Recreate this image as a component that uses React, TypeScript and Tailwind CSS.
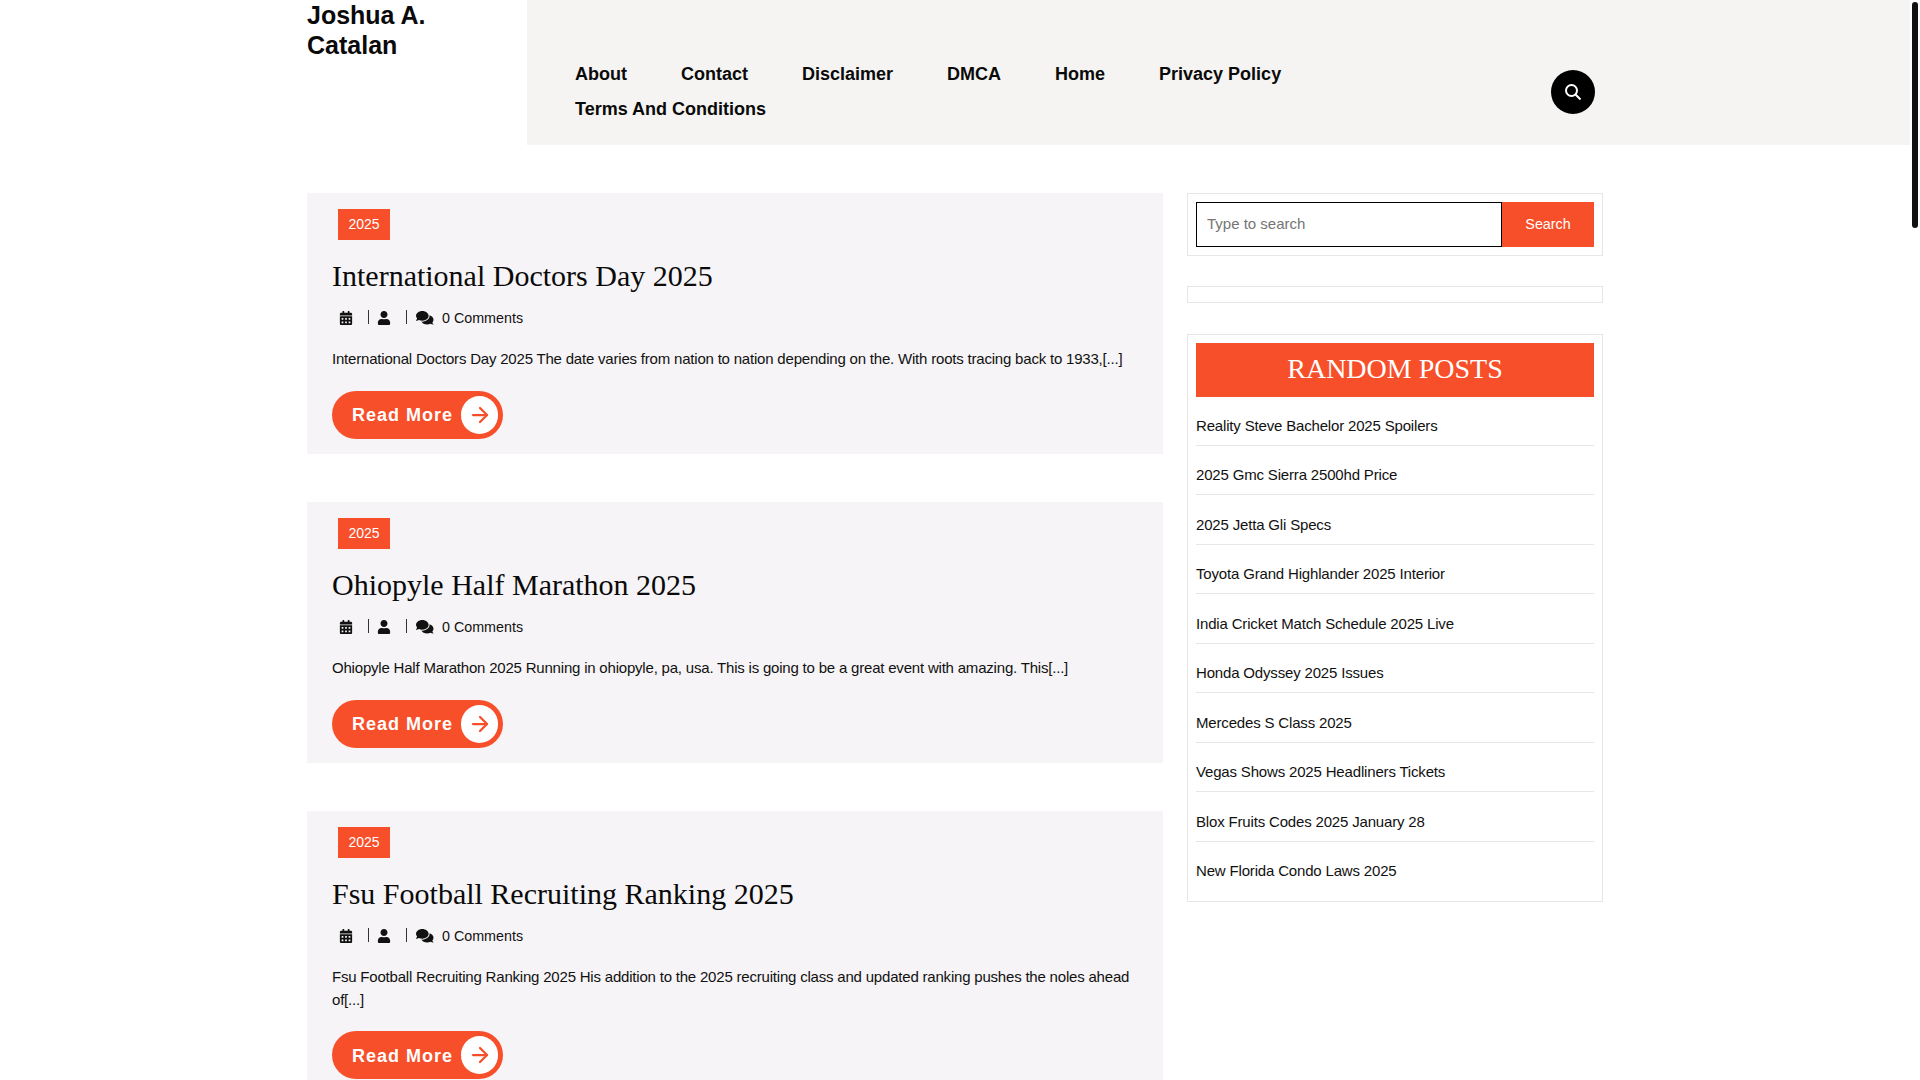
import { ArrowRight } from 'lucide-react'
import { FaCalendarAlt, FaUser, FaComments } from 'react-icons/fa'

const navItems = ['About', 'Contact', 'Disclaimer', 'DMCA', 'Home', 'Privacy Policy', 'Terms And Conditions']

const posts = [
  {
    title: 'International Doctors Day 2025',
    excerpt:
      'International Doctors Day 2025 The date varies from nation to nation depending on the. With roots tracing back to 1933,[...]',
  },
  {
    title: 'Ohiopyle Half Marathon 2025',
    excerpt:
      'Ohiopyle Half Marathon 2025 Running in ohiopyle, pa, usa. This is going to be a great event with amazing. This[...]',
  },
  {
    title: 'Fsu Football Recruiting Ranking 2025',
    excerpt:
      'Fsu Football Recruiting Ranking 2025 His addition to the 2025 recruiting class and updated ranking pushes the noles ahead of[...]',
  },
]

const randomPosts = [
  'Reality Steve Bachelor 2025 Spoilers',
  '2025 Gmc Sierra 2500hd Price',
  '2025 Jetta Gli Specs',
  'Toyota Grand Highlander 2025 Interior',
  'India Cricket Match Schedule 2025 Live',
  'Honda Odyssey 2025 Issues',
  'Mercedes S Class 2025',
  'Vegas Shows 2025 Headliners Tickets',
  'Blox Fruits Codes 2025 January 28',
  'New Florida Condo Laws 2025',
]

function Header() {
  return (
    <header className="flex h-[145px]">
      <div className="w-[527px] pl-[307px]">
        <div className="w-[180px] text-[25px] font-bold leading-[30px] text-[#0a0a0a]">Joshua A. Catalan</div>
      </div>
      <div className="flex flex-1 items-start bg-[#f5f4f2]">
        <nav className="flex w-[1024px] flex-wrap gap-x-[54px] pl-[48px] pr-[60px] pt-[57px]">
          {navItems.map((item) => (
            <a key={item} className="text-[18px] font-bold leading-[35px] text-[#0a0a0a]">
              {item}
            </a>
          ))}
        </nav>
        <button className="mt-[70px] flex h-[44px] w-[44px] items-center justify-center rounded-full bg-black">
          <svg width="16" height="16" viewBox="0 0 16 16" fill="none" stroke="white" strokeWidth="2">
            <circle cx="6.5" cy="6.5" r="5.5" />
            <path d="M10.5 10.5L15.5 15.5" />
          </svg>
        </button>
      </div>
    </header>
  )
}

function PostCard({ title, excerpt }: { title: string; excerpt: string }) {
  return (
    <article className="mb-[48px] bg-[#f6f4f6] px-[25px] pb-[15.5px] pt-[16px]">
      <span className="ml-[6px] flex h-[31px] w-[52px] items-center justify-center bg-[#f74f2a] text-[14px] text-white">
        2025
      </span>
      <h2 className="mt-[16px] font-['Liberation_Serif',serif] text-[30px] leading-[40px] text-[#0a0a0a]">{title}</h2>
      <div className="mt-[12px] flex h-[20px] items-center text-[14.3px] text-[#111]">
        <FaCalendarAlt className="ml-[7px] text-[14px]" />
        <span className="ml-[15px] h-[14px] w-px -translate-y-[1px] bg-[#333]" />
        <FaUser className="ml-[8px] text-[14px]" />
        <span className="ml-[15px] h-[14px] w-px -translate-y-[1px] bg-[#333]" />
        <FaComments className="ml-[9px] text-[17.5px]" />
        <span className="ml-[8.5px] mt-[1px]">0 Comments</span>
      </div>
      <p className="mt-[20px] text-[15px] leading-[22.5px] tracking-[-0.2px] text-[#111]">{excerpt}</p>
      <a className="mt-[20px] flex h-[48px] w-[171px] items-center rounded-full bg-[#f74f2a] pl-[20px] pr-[5px] text-[18px] font-bold tracking-[1px] text-white">
        <span className="mt-[2px]">Read More</span>
        <span className="ml-auto flex h-[38px] w-[37px] items-center justify-center rounded-full bg-white">
          <ArrowRight size={24} strokeWidth={2.25} color="#f74f2a" />
        </span>
      </a>
    </article>
  )
}

function Sidebar() {
  return (
    <aside className="ml-[24px] w-[416px]">
      <div className="border border-[#e6e6e6] p-[8px]">
        <form className="flex h-[45px]">
          <input
            placeholder="Type to search"
            className="h-full w-[306px] border border-black bg-white px-[10px] pb-[2px] text-[15px] outline-none placeholder:text-[#757575]"
          />
          <button type="button" className="flex-1 bg-[#f74f2a] text-[14.3px] text-white">
            Search
          </button>
        </form>
      </div>
      <div className="mt-[30px] h-[17px] border border-[#e6e6e6]" />
      <div className="mt-[31px] border border-[#e6e6e6] px-[8px] pb-[18px] pt-[8px]">
        <h3 className="flex h-[54px] items-center justify-center bg-[#f74f2a] pb-[2px] font-['Liberation_Serif',serif] text-[28px] text-white">
          RANDOM POSTS
        </h3>
        <ul className="-mt-px">
          {randomPosts.map((post, i) => (
            <li
              key={post}
              className={
                i === randomPosts.length - 1
                  ? 'pt-[18.5px] text-[15px] leading-[22.5px] tracking-[-0.17px] text-[#111]'
                  : 'border-b border-[#e6e6e6] pb-[7.5px] pt-[18.5px] text-[15px] leading-[22.5px] tracking-[-0.17px] text-[#111]'
              }
            >
              {post}
            </li>
          ))}
        </ul>
      </div>
    </aside>
  )
}

export default function App() {
  return (
    <div className="flex h-screen overflow-hidden bg-white font-['Liberation_Sans',Arial,sans-serif]">
      <div className="w-[1910px]">
        <Header />
        <main className="mt-[48px] flex pl-[307px]">
          <div className="w-[856px]">
            {posts.map((post) => (
              <PostCard key={post.title} {...post} />
            ))}
          </div>
          <Sidebar />
        </main>
      </div>
      <div className="w-[10px] pl-[2px] pt-[2px]">
        <div className="h-[226px] w-[6px] rounded-[3px] bg-[#111]" />
      </div>
    </div>
  )
}
